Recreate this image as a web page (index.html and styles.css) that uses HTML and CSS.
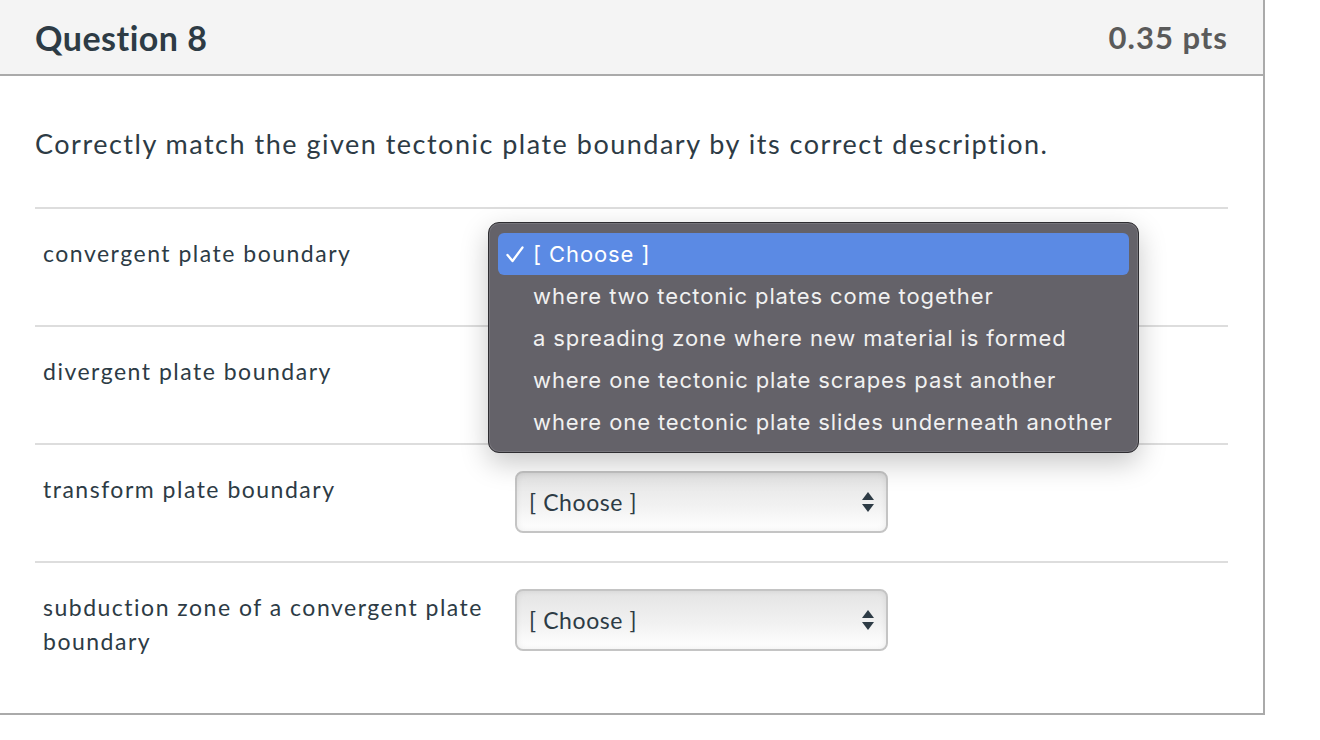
FILE: index.html
```html
<!DOCTYPE html>
<html lang="en">
<head>
    <meta charset="UTF-8">
    <meta name="viewport" content="width=device-width, initial-scale=1.0">
    <title>Question 8</title>
    <link rel="stylesheet" href="styles.css">
</head>
<body>
    <div class="question">
        <div class="question-header">
            <h2 class="question-title">Question 8</h2>
            <span class="question-points">0.35 pts</span>
        </div>

        <div class="question-body">
            <p class="question-text">Correctly match the given tectonic plate boundary by its correct description.</p>

            <div class="match-row">
                <div class="match-label">convergent plate boundary</div>
                <div class="match-answer">
                    <div class="select-box covered">
                        <span>[ Choose ]</span>
                        <span class="select-arrows"></span>
                    </div>

                    <!-- open native menu -->
                    <ul class="select-menu">
                        <li class="menu-item selected">
                            <svg class="check" width="18" height="17" viewBox="0 0 18 17">
                                <polyline points="1.5,9 6.5,15 16.5,1.5" fill="none" stroke="#ffffff" stroke-width="2.3" stroke-linecap="round" stroke-linejoin="round"/>
                            </svg>
                            [ Choose ]
                        </li>
                        <li class="menu-item">where two tectonic plates come together</li>
                        <li class="menu-item">a spreading zone where new material is formed</li>
                        <li class="menu-item">where one tectonic plate scrapes past another</li>
                        <li class="menu-item">where one tectonic plate slides underneath another</li>
                    </ul>
                </div>
            </div>

            <div class="match-row">
                <div class="match-label">divergent plate boundary</div>
                <div class="match-answer">
                    <div class="select-box covered">
                        <span>[ Choose ]</span>
                        <span class="select-arrows"></span>
                    </div>
                </div>
            </div>

            <div class="match-row">
                <div class="match-label">transform plate boundary</div>
                <div class="match-answer">
                    <div class="select-box">
                        <span>[ Choose ]</span>
                        <span class="select-arrows"></span>
                    </div>
                </div>
            </div>

            <div class="match-row">
                <div class="match-label">subduction zone of a convergent plate boundary</div>
                <div class="match-answer">
                    <div class="select-box">
                        <span>[ Choose ]</span>
                        <span class="select-arrows"></span>
                    </div>
                </div>
            </div>
        </div>
    </div>
</body>
</html>
```

FILE: styles.css
```css
:root {
    --text-color: #2d3b45;
    --points-color: #5a5a5a;
    --header-bg: #f4f4f4;
    --card-border: #aaaaaa;
    --row-border: #dddddd;
    --menu-bg: #646269;
    --menu-highlight: #5b8ae4;
}

body {
    margin: 0;
    background-color: #ffffff;
    font-family: 'Lato', 'Open Sans', sans-serif;
    color: var(--text-color);
}

.question {
    width: 1263px;
    border-right: 2px solid var(--card-border);
    border-bottom: 2px solid var(--card-border);
}

.question-header {
    display: flex;
    align-items: center;
    justify-content: space-between;
    height: 74px;
    padding: 0 35px;
    background-color: var(--header-bg);
    border-bottom: 2px solid var(--card-border);
}

.question-title {
    margin: 0;
    font-size: 34px;
    font-weight: 700;
    color: var(--text-color);
    letter-spacing: 0.5px;
}

.question-points {
    font-size: 31px;
    font-weight: 700;
    color: var(--points-color);
    letter-spacing: 1px;
}

.question-body {
    padding: 49px 35px 27px;
}

.question-text {
    margin: 0 0 44px;
    font-size: 27px;
    line-height: 38px;
    letter-spacing: 1.5px;
}

.match-row {
    display: flex;
    align-items: flex-start;
    border-top: 2px solid var(--row-border);
    padding: 26px 0 28px;
}

.match-label {
    width: 452px;
    padding: 1px 20px 0 8px;
    font-size: 23px;
    line-height: 34px;
    letter-spacing: 1.5px;
}

.match-answer {
    position: relative;
}

.select-box {
    display: flex;
    align-items: center;
    justify-content: space-between;
    box-sizing: border-box;
    width: 373px;
    height: 62px;
    padding: 0 12px 0 12px;
    border: 2px solid #c4c4c4;
    border-radius: 8px;
    background: linear-gradient(to bottom, #e4e4e4 0%, #f1f1f1 55%, #ffffff 100%);
    box-shadow: inset 0 0 6px rgb(0 0 0 / 0.08);
    font-size: 23px;
    letter-spacing: 0.6px;
}

/* selects hidden behind the open menu */
.select-box.covered {
    visibility: hidden;
}

.select-arrows {
    position: relative;
    width: 12px;
    height: 22px;
}

.select-arrows::before,
.select-arrows::after {
    content: '';
    position: absolute;
    left: 0;
    border-left: 6px solid transparent;
    border-right: 6px solid transparent;
}

.select-arrows::before {
    top: 1px;
    border-bottom: 8px solid var(--text-color);
}

.select-arrows::after {
    bottom: 1px;
    border-top: 8px solid var(--text-color);
}

.select-menu {
    position: absolute;
    top: -13px;
    left: -27px;
    z-index: 10;
    box-sizing: border-box;
    width: 651px;
    margin: 0;
    padding: 10px 9px 9px;
    list-style: none;
    background-color: var(--menu-bg);
    border: 1px solid #2e2d31;
    border-radius: 11px;
    box-shadow: 0 10px 28px rgb(0 0 0 / 0.22), inset 0 0 0 1px rgb(255 255 255 / 0.12);
    font-family: 'Inter', 'Roboto', sans-serif;
    font-size: 22px;
    letter-spacing: 0.9px;
    color: #f1f1f1;
    visibility: visible;
}

.menu-item {
    height: 42px;
    line-height: 42px;
    padding-left: 35px;
    border-radius: 6px;
    white-space: nowrap;
}

.menu-item.selected {
    position: relative;
    background-color: var(--menu-highlight);
    color: #ffffff;
}

.check {
    position: absolute;
    left: 8px;
    top: 13px;
}
```
